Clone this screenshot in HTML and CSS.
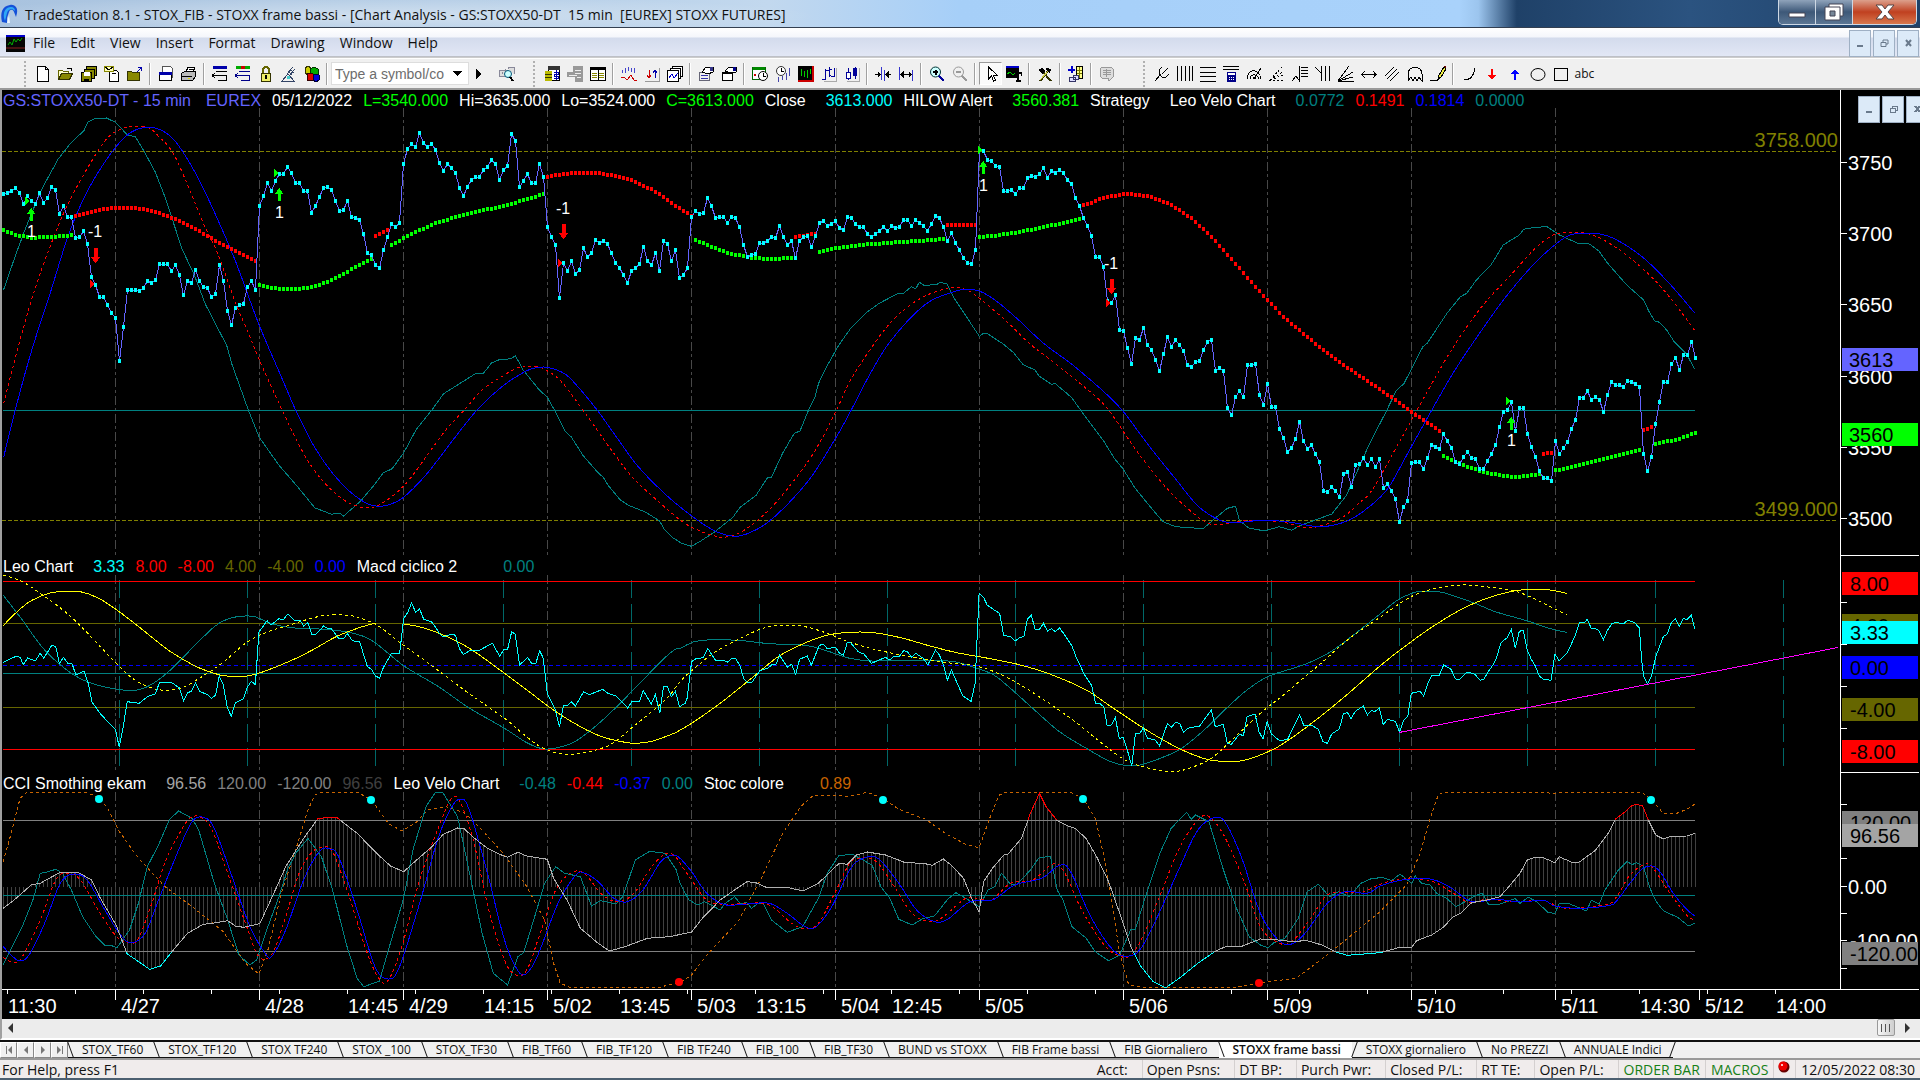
FILE: index.html
```html
<!DOCTYPE html>
<html lang="en">
<head>
<meta charset="utf-8">
<title>TradeStation 8.1 - STOX_FIB</title>
<link rel="stylesheet" href="styles.css">
</head>
<body>
<header class="titlebar">
  <svg class="logo" viewBox="0 0 18 20"><path d="M2 18C0 9 2 2 10 1c5-1 8 3 7 8l-1 4-2-5c-1-3-4-3-5 0l-2 6v5z" fill="#1450d8"/><path d="M4 14C3 7 6 3 11 3c3 0 4 2 4 4-3-3-7-2-8 2l-2 8z" fill="#2fa8f5"/><path d="M7 19l2-8 1 8z" fill="#eaf4ff"/></svg>
  <h1>TradeStation 8.1 - STOX_FIB - STOXX frame bassi - [Chart Analysis - GS:STOXX50-DT&nbsp; 15 min&nbsp; [EUREX] STOXX FUTURES]</h1>
  <div class="wincontrols">
    <button class="wmin" aria-label="Minimize"><svg viewBox="0 0 18 16" width="18" height="16"><path d="M1 9h16v4H1z" fill="#fff" stroke="#445"/></svg></button>
    <button class="wmax" aria-label="Restore"><svg viewBox="0 0 20 18" width="20" height="18"><path d="M5 1h14v12H5z" fill="#fff" stroke="#445"/><path d="M1 4h15v13H1z" fill="#fff" stroke="#445"/><path d="M6 8h5v5H6z" fill="#789" stroke="#445"/></svg></button>
    <button class="wclose" aria-label="Close"><svg viewBox="0 0 20 16" width="20" height="16"><path d="M1 1h6l3 4 3-4h6l-6 7 6 7h-6l-3-4-3 4H1l6-7z" fill="#fff" stroke="#544"/></svg></button>
  </div>
</header>
<nav class="menubar">
  <svg width="19" height="17" viewBox="0 0 19 17"><path d="M0 0h19v17H0z" fill="#050505"/><path d="M0 0h19v2H0z" fill="#00c"/><path d="M0 13h19" stroke="#822" fill="none"/><path d="M2 10l2-3 2 3 2-6 2 3 2-3 2 2 2-3" stroke="#0a0" fill="none"/></svg>
  <a href="#">File</a><a href="#">Edit</a><a href="#">View</a><a href="#">Insert</a><a href="#">Format</a><a href="#">Drawing</a><a href="#">Window</a><a href="#">Help</a>
  <div class="mdi"><button aria-label="Minimize chart"><svg viewBox="0 0 9 9"><path d="M1 7h6" class="g2"/></svg></button><button aria-label="Restore chart"><svg viewBox="0 0 9 9"><path d="M3 3V1h5v4H6M1 3.500h5v4H1z" class="g1"/></svg></button><button aria-label="Close chart"><svg viewBox="0 0 9 9"><path d="M2 1l5 6M7 1L2 7" class="g2"/></svg></button></div>
</nav>
<div class="toolbar">
  <i class="grip"></i>
  <button aria-label="New"><svg viewBox="0 0 16 16"><path d="M2.500.5h8l3 3v12h-11zM10.500.5v3h3" fill="#fff" stroke="#000"/></svg></button>
  <button aria-label="Open"><svg viewBox="0 0 16 16"><path d="M.5 13.500v-9h4l1 1h5v2" fill="#ffc" stroke="#660"/><path d="M.5 13.500l3-6h11l-3 6z" fill="#880" stroke="#330"/><path d="M9 2.500h4v2" fill="none" stroke="#000"/></svg></button>
  <button aria-label="Save all"><svg viewBox="0 0 16 16"><path d="M5.500.5h10v9h-10z" fill="#880" stroke="#000"/><path d="M3.500 3.500h10v9h-10z" fill="#880" stroke="#000"/><path d="M.5 6.500h10v9H.5z" fill="#880" stroke="#000"/><path d="M3 6h6v4H3z" fill="#fff"/><path d="M3 13h5v3H3z" fill="#000"/></svg></button>
  <button aria-label="Workspace from template"><svg viewBox="0 0 16 16"><path d="M5.500 4.500h7l2 2v9h-9z" fill="#fff" stroke="#000"/><path d="M.5.500h9v5h-9z" fill="#ffb" stroke="#880"/><path d="M1 1l4 3 4-3M8 7.500h4" fill="none" stroke="#000"/></svg></button>
  <button aria-label="Close workspace"><svg viewBox="0 0 16 16"><path d="M.5 14.500v-9h4l1 1h7v8z" fill="#880" stroke="#330"/><path d="M10 6l4-4M11 1.500h3.500V5" fill="none" stroke="#00a"/></svg></button>
  <i class="sep"></i>
  <button aria-label="Window"><svg viewBox="0 0 16 16"><path d="M4.500.5h8l2 2v9h-10z" fill="#fff" stroke="#555"/><path d="M1.500 6.500h12v8h-12z" fill="#fff" stroke="#000"/><path d="M1 6h13v3H1z" fill="#00a"/></svg></button>
  <button aria-label="Print"><svg viewBox="0 0 16 16"><path d="M5 6l2-5h7l-2 5" fill="#fff" stroke="#000"/><path d="M.5 7.500l3-2h11v5l-3 4H.5z" fill="#bbb" stroke="#000"/><path d="M1 10.500h10M8 3.500h4" stroke="#000"/><path d="M7 12h2v1H7z" fill="#dd0"/></svg></button>
  <i class="sep"></i>
  <button aria-label="Insert bar"><svg viewBox="0 0 16 16"><path d="M1 0h14v3H1z" fill="#00a"/><path d="M4 5.500h11M6 9.500h8v5H6M0 9.500h6M3 7l-3 2.500L3 12" fill="none" stroke="#000"/></svg></button>
  <button aria-label="Replace bar"><svg viewBox="0 0 16 16"><path d="M1 0h5v3H1z" fill="#0a0"/><path d="M6 0h4v3H6z" fill="#c00"/><path d="M10 0h5v3h-5z" fill="#0a0"/><path d="M4 5.500h11M6 9.500h8v5H6M0 9.500h6M3 7l-3 2.500L3 12" fill="none" stroke="#008"/></svg></button>
  <button aria-label="Lock"><svg viewBox="0 0 16 16"><path d="M5 7V3l2-2h2l2 2v4" fill="none" stroke="#660" stroke-width="2"/><path d="M3.500 7.500h9v8h-9z" fill="#ee6" stroke="#330"/><path d="M7 9h2v4H7z"/></svg></button>
  <button aria-label="Data feed"><svg viewBox="0 0 16 16"><path d="M1 15l6-7 6 7zM6 8l6-7M8 10l6-7M7 5l4 4M9 3l4 4" fill="none" stroke="#346"/><path d="M6 10h3v3H6z" fill="#4cc"/></svg></button>
  <button aria-label="Components"><svg viewBox="0 0 16 16"><path d="M1 2l3-2 3 2v5l-3 2-3-2z" fill="#cc0" stroke="#330"/><path d="M6 3l4-2 4 2v5l-4 1-4-1z" fill="#0a0" stroke="#030"/><path d="M3 8l3-1 3 1v6l-3 1-3-1z" fill="#d00" stroke="#300"/><path d="M9 9l3-1 3 1v5l-3 2-3-2z" fill="#00d" stroke="#003"/></svg></button>
  <i class="sep"></i>
  <label class="symbol"><input type="text" placeholder="Type a symbol/co" aria-label="Symbol"><svg viewBox="0 0 9 5"><path d="M0 0h9L4.500 5z"/></svg></label>
  <button class="go" aria-label="Go"><svg viewBox="0 0 16 16"><path d="M5 3l5 5-5 5z"/></svg></button>
  <button class="find" aria-label="Symbol lookup"><svg viewBox="0 0 16 16"><path d="M.5 4.500h8v6h-8zM3 8V6M6 8V3M9 3V1h6v7" fill="#ddd" stroke="#889"/><circle cx="9" cy="8" r="3.500" fill="#cff" stroke="#057"/><path d="M11 11l3 4" stroke="#000" stroke-width="2"/></svg></button>
  <i class="grip"></i>
  <button aria-label="Account"><svg viewBox="0 0 16 16"><path d="M4.500.5h11v14h-11z" fill="#fff" stroke="#000"/><path d="M4 0h12v4H4z" fill="#333"/><path d="M1 5h7v10H1z" fill="#bb0"/><path d="M1 8.500h7M1 11.500h7" stroke="#330"/><path d="M10 6h4v2h-4v2h4v2h-4M12 4v10" fill="none" stroke="#00a"/></svg></button>
  <button aria-label="Orders"><svg viewBox="0 0 16 16"><path d="M6 0h10v16H8v-5H0V6h6z" fill="#999"/><path d="M8 4.500h6M8 7.500h6M2 9h8M10 11h4" stroke="#eee"/></svg></button>
  <button aria-label="Matrix"><svg viewBox="0 0 16 16"><path d="M.5 1.500h15v13H.5z" fill="#fff" stroke="#000"/><path d="M1 1h14v3H1z"/><path d="M2 7.500h5M2 9.500h5M2 11.500h5M9 7.500h5M9 9.500h5M9 11.500h5" stroke="#880"/><path d="M8 4v11" stroke="#000"/></svg></button>
  <i class="sep"></i>
  <button aria-label="Insert analysis"><svg viewBox="0 0 16 16"><path d="M1.500 4v3M4.500 2v5M7.500 1v4M10.500 2v4M13.500 2v5" stroke="#44c"/><path d="M0 11h3l3 3 4-5 3 5h3" fill="none" stroke="#c00"/></svg></button>
  <button aria-label="Insert strategy"><svg viewBox="0 0 16 16"><path d="M15.500 2v13H1" fill="none" stroke="#999"/><path d="M5 4v8M3 9l2 3 2-3" fill="none" stroke="#c00"/><path d="M11 12V4M9 7l2-3 2 3" fill="none" stroke="#00a"/></svg></button>
  <button aria-label="Chart windows"><svg viewBox="0 0 16 16"><path d="M5.500.5h10v10h-10z" fill="#fff" stroke="#000"/><path d="M3.500 2.500h10v10h-10z" fill="#fff" stroke="#000"/><path d="M.5 4.500h11v11H.5z" fill="#fff" stroke="#000"/><path d="M2 12l3-4 2 4 4-5" fill="none" stroke="#00c"/></svg></button>
  <i class="sep"></i>
  <button aria-label="Format symbol"><svg viewBox="0 0 16 16"><path d="M1.500 6.500h10v8h-10z" fill="#eee" stroke="#667"/><path d="M3 9.500h7M3 12h7" stroke="#33a"/><path d="M4 6l4-5h7v5l-5 2z" fill="#fff" stroke="#000"/><path d="M12 1h3v4h-3z" fill="#338"/></svg></button>
  <button aria-label="Format window"><svg viewBox="0 0 16 16"><path d="M1.500 6.500h10v8h-10z" fill="#fff" stroke="#000"/><path d="M1 6h11v2H1z"/><path d="M4 5l4-4h7v5l-5 1z" fill="#fff" stroke="#000"/><path d="M12 1h3v4h-3z" fill="#008"/></svg></button>
  <i class="sep"></i>
  <button aria-label="Calendar"><svg viewBox="0 0 16 16"><path d="M.5 1.500h13v12H.5z" fill="#fff" stroke="#060"/><path d="M1 1h12v3H1z" fill="#080"/><path d="M2 8h2v2H2z" fill="#c00"/><circle cx="11" cy="10" r="4.500" fill="#fff" stroke="#000"/><path d="M11 7v3h3" fill="none" stroke="#000"/></svg></button>
  <button aria-label="Bar interval"><svg viewBox="0 0 16 16"><circle cx="6" cy="5" r="4.500" fill="#fff" stroke="#333"/><path d="M6 2v3h3" fill="none" stroke="#000"/><path d="M3.500 11v5M7.500 10v4M11.500 7v7M14.500 2v8" stroke="#44a"/></svg></button>
  <button aria-label="Chart colors"><svg viewBox="0 0 16 16"><path d="M0 0h16v16H0z" fill="#c00"/><path d="M0 0h14v14H0z"/><path d="M3.500 3v7M6.500 5v6M9.500 4v8M12.500 3v5" stroke="#0c0"/></svg></button>
  <button aria-label="OHLC bars"><svg viewBox="0 0 16 16"><path d="M4 3v11M8 1v10M13 2v9M1 13h3M4 4h4M8 9h2M8 3h3M10 10h3" stroke="#009" fill="none"/><path d="M15.500 2v13H3" stroke="#aaa" fill="none"/></svg></button>
  <button aria-label="Candles"><svg viewBox="0 0 16 16"><path d="M4 2v12M11 1v12" stroke="#009"/><path d="M2 6h4v6H2z" fill="#fff" stroke="#009"/><path d="M9 2h4v8H9z" fill="#009"/><path d="M15.500 2v13H3" stroke="#aaa" fill="none"/></svg></button>
  <i class="sep"></i>
  <button aria-label="Less spacing"><svg viewBox="0 0 16 16"><path d="M6.500 1v13M9.500 4v11" stroke="#33c"/><path d="M0 8.500h5M3 6v5l2-2.500zM16 8.500h-5M13 6v5l-2-2.500z" stroke="#000"/></svg></button>
  <button aria-label="More spacing"><svg viewBox="0 0 16 16"><path d="M1.500 1v13M14.500 4v11" stroke="#33c"/><path d="M3 8.500h10M5 6v5L3 8.500zM11 6v5l2-2.500z" stroke="#000"/></svg></button>
  <i class="sep"></i>
  <button aria-label="Zoom in"><svg viewBox="0 0 16 16"><circle cx="6.500" cy="6" r="5" fill="#cff" stroke="#033"/><path d="M4 6h5M6.500 3.500v5" stroke="#000" stroke-width="2"/><path d="M10 10l5 5" stroke="#009" stroke-width="2"/></svg></button>
  <button aria-label="Zoom out"><svg viewBox="0 0 16 16"><circle cx="6.500" cy="6" r="5" fill="none" stroke="#999"/><path d="M4 6h5M10 10l5 5" stroke="#999" stroke-width="2"/></svg></button>
  <i class="sep"></i>
  <button class="on" aria-label="Pointer"><svg viewBox="0 0 16 16"><path d="M5.500 1v12l3-3 2 5 2-1-2-4.500h4z" fill="#fff" stroke="#000"/></svg></button>
  <button aria-label="Data tip"><svg viewBox="0 0 16 16"><path d="M0 1h13v11H0z"/><path d="M0 0h13v2H0z" fill="#00c"/><path d="M1 8l3-2 3 3 4-3" fill="none" stroke="#0c0"/><path d="M9 7h7v3M12 7v9M10 15h5" stroke="#000" stroke-width="2" fill="none"/></svg></button>
  <i class="sep"></i>
  <button aria-label="Tools"><svg viewBox="0 0 16 16"><path d="M3 15L12 4M4 4l10 11" stroke="#330" stroke-width="2"/><path d="M3 14L12 4" stroke="#cc4"/><path d="M9 2l5 1-1 4-3-2z"/><path d="M1 4l4-2 3 3-3 3z"/></svg></button>
  <i class="sep"></i>
  <button aria-label="Add to matrix"><svg viewBox="0 0 16 16"><path d="M8.500.5h6v12h-6z" fill="#ff8" stroke="#000"/><path d="M9 4.500h5M9 7.500h5M11.500 1v11" stroke="#770"/><path d="M3.500 0v7M0 3.500h7" stroke="#00c" stroke-width="2"/><path d="M1.500 11.500h6v4h-6zM5 9h5v4H5z" fill="#ddf" stroke="#336"/></svg></button>
  <i class="sep"></i>
  <button aria-label="Notes"><svg viewBox="0 0 16 16"><path d="M3 1h9l2 2v8l-4 4-1-3H3l-2-2V3z" fill="#ddd" stroke="#999"/><path d="M4 4.500h8M4 6.500h8M4 8.500h8M7.500 3v8" stroke="#999"/></svg></button>
  <i class="grip wide"></i>
  <button aria-label="Andrews pitchfork"><svg viewBox="0 0 16 16"><path d="M1 15l6-7M5 4v4l3 3h4l3-3M5 4l3-3M8 8l6-6" class="k"/></svg></button>
  <button aria-label="Cycle lines"><svg viewBox="0 0 16 16"><path d="M.5 0v15M4.500 0v15M8.500 0v15M12.500 0v15M15.500 0v15" class="k"/></svg></button>
  <button aria-label="Price lines"><svg viewBox="0 0 16 16"><path d="M0 1.500h16M0 6.500h16M0 10.500h16M0 15.500h16" class="k"/></svg></button>
  <button aria-label="Retracement calculator"><svg viewBox="0 0 16 16"><path d="M0 .5h16M0 3.500h16" class="k"/><path d="M4 6h9v10H4z" fill="#008"/><path d="M5 7h7v2H5zM6 11h1v1H6zM8 11h1v1H8zM10 11h1v1h-1zM6 13h1v1H6zM8 13h1v1H8zM10 13h1v1h-1z" fill="#fff"/></svg></button>
  <button aria-label="Speed arcs"><svg viewBox="0 0 16 16"><path d="M1 13c0-10 12-12 14 0M4 13c0-5 7-6 9 0M8 13L15 2M7 13c0-2 2-2 3 0" class="k"/></svg></button>
  <button aria-label="Fan"><svg viewBox="0 0 16 16"><path d="M0 14.500h15M1 14L14 0M1 14L15 5M1 14l14-5" class="k" stroke-dasharray="2 2"/></svg></button>
  <button aria-label="Time extension"><svg viewBox="0 0 16 16"><path d="M0 15l4-5 3 4V0M9 1.500h7M9 4.500h7M9 7.500h7M9 10.500h7" class="k"/></svg></button>
  <button aria-label="Time retracement"><svg viewBox="0 0 16 16"><path d="M0 1l6 6M6.500 0v15M10.500 0v15M14.500 0v15" class="k"/></svg></button>
  <button aria-label="Gann fan"><svg viewBox="0 0 16 16"><path d="M0 15L11 0M0 15L15 6M0 15.500h16M0 15l15-4" class="k"/></svg></button>
  <button aria-label="Horizontal line"><svg viewBox="0 0 16 16"><path d="M1 8.500h14M4 5L1 8.500 4 12M12 5l3 3.500-3 3.500" class="k"/></svg></button>
  <button aria-label="Parallel lines"><svg viewBox="0 0 16 16"><path d="M1 10L10 1M3 13L13 3M6 15l9-9" class="k"/></svg></button>
  <button aria-label="Arc"><svg viewBox="0 0 16 16"><path d="M1 15V8c0-9 14-9 14 0v7l-3-4-2 4-2-4-2 4-2-4z" class="k"/></svg></button>
  <button aria-label="Pencil"><svg viewBox="0 0 16 16"><path d="M0 14.500h7l3-3" class="k"/><path d="M8 13l1-4 5-8 2 2-5 8z" fill="#ee4" stroke="#000"/><path d="M13 0h3v3z" fill="#600"/></svg></button>
  <i class="sep"></i>
  <button aria-label="Curve"><svg viewBox="0 0 16 16"><path d="M3 14c6 0 10-4 11-12" class="k"/></svg></button>
  <button aria-label="Down arrow"><svg viewBox="0 0 16 16"><path d="M7 3h2v6h3l-4 5-4-5h3z" fill="#f00"/></svg></button>
  <button aria-label="Up arrow"><svg viewBox="0 0 16 16"><path d="M8 3l4 5H9v6H7V8H4z" fill="#00f"/></svg></button>
  <button aria-label="Ellipse"><svg viewBox="0 0 16 16"><ellipse cx="8" cy="8.500" rx="7" ry="6" class="k"/></svg></button>
  <button aria-label="Rectangle"><svg viewBox="0 0 16 16"><path d="M1.500 2.500h13v12h-13z" class="k"/></svg></button>
  <button class="abc">abc</button>
</div>

<main class="chart">
  <section class="pane">
    <svg class="plot" viewBox="2 90 1838 466" preserveAspectRatio="none">
      <path class="session" d="M115.500 108V555M259.500 108V555M403.500 108V555M547.500 108V555M691.500 108V555M835.500 108V555M979.500 108V555M1123.500 108V555M1267.500 108V555M1411.500 108V555M1555.500 108V555"/>
      <path class="level" d="M2 151.500H1836M2 520.500H1836"/>
      <path class="teal" d="M3 410.500H1695"/>
      <path class="teal" id="velo1"/><path class="red dash" id="velo1Fast"/><path class="blue" id="velo1Slow"/>
      <path class="trail down" id="trailDown"/><path class="trail up" id="trailUp"/>
      <path class="price" id="price"/><path class="ticks" id="priceDots"/>
      <g id="signals"></g>
      <text class="num olive" x="1838" y="147" text-anchor="end">3758.000</text>
      <text class="num olive" x="1838" y="516" text-anchor="end">3499.000</text>
    </svg>
    <p class="legend"><span class="c-sym">GS:STOXX50-DT - 15 min</span><span class="c-sym pre">EUREX</span><span>05/12/2022</span><span class="c-lime">L=3540.000</span><span>Hi=3635.000</span><span>Lo=3524.000</span><span class="c-lime">C=3613.000</span><span class="name">Close</span><span class="c-cyan">3613.000</span><span class="name">HILOW Alert</span><span class="c-lime">3560.381</span><span class="name">Strategy</span><span class="name">Leo Velo Chart</span><span class="c-teal">0.0772</span><span class="c-red">0.1491</span><span class="c-blue">0.1814</span><span class="c-teal">0.0000</span></p>
  </section>
  <svg class="axis" viewBox="1840 90 80 466" preserveAspectRatio="none">
    <path class="rule" d="M1840.500 90V556M1840 555.500H1919M1841 162.500H1847M1841 233.500H1847M1841 304.500H1847M1841 376.500H1847M1841 447.500H1847M1841 518.500H1847"/>
    <g class="num white"><text x="1848" y="170">3750</text><text x="1848" y="241">3700</text><text x="1848" y="312">3650</text><text x="1848" y="384">3600</text><text x="1848" y="455">3550</text><text x="1848" y="526">3500</text></g>
    <path fill="#6464ff" d="M1842 348H1918v23H1842z"/><path fill="#0f0" d="M1842 423H1918v23H1842z"/>
    <g class="num"><text x="1849" y="367">3613</text><text x="1849" y="442">3560</text></g>
  </svg>
  <div class="mdi inner"><button aria-label="Minimize pane"><svg viewBox="0 0 9 9"><path d="M1 7h6" class="g2"/></svg></button><button aria-label="Restore pane"><svg viewBox="0 0 9 9"><path d="M3 3V1h5v4H6M1 3.500h5v4H1z" class="g1"/></svg></button><button aria-label="Close pane"><svg viewBox="0 0 9 9"><path d="M2 1l5 6M7 1L2 7" class="g2"/></svg></button></div>

  <section class="pane">
    <svg class="plot" viewBox="2 556 1838 217" preserveAspectRatio="none">
      <path class="session" d="M115.500 575V771M259.500 575V771M403.500 575V771M547.500 575V771M691.500 575V771M835.500 575V771M979.500 575V771M1123.500 575V771M1267.500 575V771M1411.500 575V771M1555.500 575V771"/>
      <path class="cycle" d="M119.500 580V766M247.500 580V766M375.500 580V766M503.500 580V766M631.500 580V766M759.500 580V766M887.500 580V766M1015.500 580V766M1143.500 580V766M1271.500 580V766M1399.500 580V766M1527.500 580V766M1655.500 580V766M1783.500 580V766"/>
      <path class="red" d="M3 581.500H1695M3 749.500H1695"/>
      <path class="oliveline" d="M3 623.500H1695M3 707.500H1695"/>
      <path class="blue dash2" d="M3 665.500H1695"/>
      <path class="teal" d="M3 673.500H1695"/>
      <path class="teal" id="macdSlow"/><path class="yellow" id="macd"/><path class="yellow dash" id="macdFast"/>
      <path class="cyan" id="leo"/>
      <path class="magenta" d="M1399 732.500L1838 647.500"/>
    </svg>
    <p class="legend"><span class="name">Leo Chart</span><span class="c-cyan">3.33</span><span class="c-red">8.00</span><span class="c-red">-8.00</span><span class="c-olive">4.00</span><span class="c-olive">-4.00</span><span class="c-blue">0.00</span><span class="name far">Macd ciclico 2</span><span class="c-teal">0.00</span></p>
  </section>
  <svg class="axis" viewBox="1840 556 80 217" preserveAspectRatio="none">
    <path class="rule" d="M1840.500 556V773M1840 772.500H1919M1841 602.500H1847M1841 644.500H1847M1841 686.500H1847M1841 728.500H1847"/>
    <path fill="red" d="M1842 572H1918v23H1842zM1842 740H1918v23H1842z"/><path fill="#660" d="M1842 614H1918v23H1842zM1842 698H1918v23H1842z"/><path fill="#00f" d="M1842 656H1918v23H1842z"/>
    <g class="num"><text x="1850" y="591">8.00</text><text x="1850" y="633">4.00</text><text x="1850" y="675">0.00</text><text x="1850" y="717">-4.00</text><text x="1850" y="759">-8.00</text></g>
    <path fill="#0ff" d="M1842 621H1918v23H1842z"/><text class="num" x="1850" y="640">3.33</text>
  </svg>

  <section class="pane">
    <svg class="plot" viewBox="2 773 1838 216" preserveAspectRatio="none">
      <defs>
        <pattern id="bars" x="2" y="0" width="4" height="8" patternUnits="userSpaceOnUse"><path d="M1 0h1v8H1z" fill="#404040"/></pattern>
        <clipPath id="over"><path d="M0 773H1700V820H0z"/></clipPath>
        <clipPath id="under"><path d="M0 952H1700V989H0z"/></clipPath>
      </defs>
      <path class="session" d="M115.500 792V988M259.500 792V988M403.500 792V988M547.500 792V988M691.500 792V988M835.500 792V988M979.500 792V988M1123.500 792V988M1267.500 792V988M1411.500 792V988M1555.500 792V988"/>
      <path id="cciBars" fill="url(#bars)"/>
      <path class="grey" d="M3 820.500H1695M3 951.500H1695"/>
      <path class="teal" d="M3 895.500H1695"/>
      <path class="orange dash" id="stoc"/>
      <path class="teal" id="velo3"/><path class="red dash" id="velo3Fast"/><path class="blue" id="velo3Slow"/>
      <path class="silver" id="cci"/><path class="red" id="cciOver" clip-path="url(#over)"/><path class="cyan" id="cciUnder" clip-path="url(#under)"/>
      <g fill="#0ff"><circle cx="99" cy="799" r="4"/><circle cx="371" cy="800" r="4"/><circle cx="883" cy="800" r="4"/><circle cx="1083" cy="799" r="4"/><circle cx="1651" cy="800" r="4"/></g>
      <g fill="red"><circle cx="679" cy="982" r="4"/><circle cx="1259" cy="983" r="4"/></g>
    </svg>
    <p class="legend"><span class="name">CCI Smothing ekam</span><span class="c-silver">96.56</span><span class="c-grey">120.00</span><span class="c-grey">-120.00</span><span class="c-dark">96.56</span><span class="name">Leo Velo Chart</span><span class="c-teal">-0.48</span><span class="c-red">-0.44</span><span class="c-blue">-0.37</span><span class="c-teal">0.00</span><span class="name mid">Stoc colore</span><span class="c-orange">0.89</span></p>
  </section>
  <svg class="axis" viewBox="1840 773 80 216" preserveAspectRatio="none">
    <path class="rule" d="M1840.500 773V989M1841 804.500H1847M1841 858.500H1847M1841 886.500H1847M1841 913.500H1847M1841 940.500H1847M1841 968.500H1847"/>
    <g class="num white"><text x="1848" y="894">0.00</text><text x="1850" y="948">-100.00</text></g>
    <path fill="#808080" d="M1842 811H1918v23H1842zM1842 942H1918v23H1842z"/>
    <g class="num"><text x="1850" y="830">120.00</text><text x="1850" y="961">-120.00</text></g>
    <path fill="#a4a4a4" d="M1842 824H1918v23H1842z"/><text class="num" x="1850" y="843">96.56</text>
  </svg>

  <svg class="time" viewBox="2 989 1918 30" preserveAspectRatio="none">
    <path class="rule" id="timeTicks"/>
    <g class="num white"><text x="8" y="1013">11:30</text><text x="121" y="1013">4/27</text><text x="265" y="1013">4/28</text><text x="348" y="1013">14:45</text><text x="409" y="1013">4/29</text><text x="484" y="1013">14:15</text><text x="553" y="1013">5/02</text><text x="620" y="1013">13:45</text><text x="697" y="1013">5/03</text><text x="756" y="1013">13:15</text><text x="841" y="1013">5/04</text><text x="892" y="1013">12:45</text><text x="985" y="1013">5/05</text><text x="1129" y="1013">5/06</text><text x="1273" y="1013">5/09</text><text x="1417" y="1013">5/10</text><text x="1561" y="1013">5/11</text><text x="1640" y="1013">14:30</text><text x="1705" y="1013">5/12</text><text x="1776" y="1013">14:00</text></g>
  </svg>
</main>

<div class="scroll">
  <button aria-label="Scroll left"><svg viewBox="0 0 6 10"><path d="M5 0v10L0 5z" fill="#333"/></svg></button>
  <i class="thumb"></i>
  <button aria-label="Scroll right"><svg viewBox="0 0 6 10"><path d="M1 0v10l5-5z" fill="#333"/></svg></button>
</div>
<nav class="tabs">
  <div class="nav"><button aria-label="First tab"><svg viewBox="0 0 8 8"><path d="M1 0h1v8H1zM7 0v8L3 4z"/></svg></button><button aria-label="Previous tab"><svg viewBox="0 0 8 8"><path d="M6 0v8L2 4z"/></svg></button><button aria-label="Next tab"><svg viewBox="0 0 8 8"><path d="M2 0v8l4-4z"/></svg></button><button aria-label="Last tab"><svg viewBox="0 0 8 8"><path d="M6 0h1v8H6zM1 0v8l4-4z"/></svg></button></div>
  <a href="#">STOX_TF60</a><a href="#">STOX_TF120</a><a href="#">STOX TF240</a><a href="#">STOX _100</a><a href="#">STOX_TF30</a><a href="#">FIB_TF60</a><a href="#">FIB_TF120</a><a href="#">FIB TF240</a><a href="#">FIB_100</a><a href="#">FIB_TF30</a><a href="#">BUND vs STOXX</a><a href="#">FIB Frame bassi</a><a href="#">FIB Giornaliero</a><a href="#" class="active" aria-current="page">STOXX frame bassi</a><a href="#">STOXX giornaliero</a><a href="#">No PREZZI</a><a href="#" class="last">ANNUALE Indici</a>
</nav>
<footer class="status">
  <span class="help">For Help, press F1</span>
  <span>Acct:</span><span>Open Psns:</span><span>DT BP:</span><span>Purch Pwr:</span><span>Closed P/L:</span><span>RT TE:</span><span>Open P/L:</span><span class="green">ORDER BAR</span><span class="green">MACROS</span><span class="led"><svg viewBox="0 0 12 12"><circle cx="6" cy="6" r="5.500" fill="#600"/><circle cx="5" cy="5" r="4.500" fill="#e00"/><circle cx="4" cy="4" r="1" fill="#fff"/></svg></span><span class="clock">12/05/2022 08:30</span>
</footer>
<script src="chart.js"></script>
</body>
</html>
```
FILE: styles.css
```css
* { box-sizing: border-box; }
body { margin: 0; height: 100vh; display: flex; flex-direction: column; overflow: hidden; background: #f0f0f0; font: 14px/18px "Open Sans", "Noto Sans", sans-serif; color: #111; border-bottom: 2px solid #4c5f70; }
button { padding: 0; border: 0; background: none; font: inherit; color: inherit; display: flex; align-items: center; justify-content: center; }
a { color: inherit; text-decoration: none; }
p, h1 { margin: 0; }

.titlebar { height: 28px; flex: none; display: flex; align-items: center; gap: 7px; border-bottom: 1px solid #333f50; background: radial-gradient(ellipse 440px 20px at 380px 16px, rgba(255, 255, 255, 0.4), transparent), linear-gradient(90deg, #a9c3df 0, #b4cde6 25%, #c2d8ee 40%, #a6cff8 50%, #a9d2fb 76%, #9cc5ee 77%, #1f4168 79%, #2b5380 88%, #1f4168 100%); }
.logo { width: 18px; height: 20px; }
.titlebar h1 { font: 14px/20px "Open Sans", sans-serif; white-space: nowrap; flex: 1; padding-top: 2px; }
.wincontrols { display: flex; align-self: flex-start; height: 25px; margin-right: 3px; border: 1px solid #cdd8e4; border-top: 0; border-radius: 0 0 5px 5px; overflow: hidden; }
.wincontrols button { width: 37px; border-right: 1px solid #cdd8e4; background: linear-gradient(#8fa3ba, #3d5878 50%, #5b7694); }
.wincontrols .wclose { width: 63px; border: 0; background: linear-gradient(#dca08c, #c04020 50%, #d8774c); }

.menubar { height: 31px; flex: none; display: flex; align-items: center; gap: 15px; padding: 0 0 1px 6px; background: linear-gradient(#fff, #f4f6fb 9px, #d3dbec 10px, #e2e7f5 28px, #999 29px, #fff 30px); }
.menubar > svg { margin-right: -7px; }
.mdi { display: flex; gap: 2px; margin-left: auto; }
.mdi button { width: 22px; height: 27px; background: #dceaf8; border: 1px solid #9fb0c4; }
.mdi svg { width: 9px; height: 9px; }
.menubar .mdi { padding-right: 1px; }
.g1, .g2 { fill: none; stroke: #6a7a8c; }
.g2 { stroke-width: 2; }

.toolbar { height: 31px; flex: none; display: flex; align-items: center; padding-left: 17px; background: #f0f0f0; border-bottom: 2px solid #999; }
.toolbar button { width: 23px; height: 23px; flex: none; }
.toolbar svg { width: 16px; height: 16px; }
.toolbar path { shape-rendering: crispEdges; }
.toolbar .on { background: #fafafa; border: 1px solid; border-color: #999 #fff #fff #999; }
.toolbar .go { width: 19px; }
.toolbar .find { width: 38px; }
.toolbar .abc { font-size: 12px; padding-left: 2px; }
.k { fill: none; stroke: #000; }
.sep { width: 8px; height: 22px; flex: none; background: linear-gradient(90deg, transparent 3px, #a0a0a0 3px 4px, #fff 4px 5px, transparent 5px); }
.grip { width: 14px; height: 26px; flex: none; background: repeating-linear-gradient(#b0b0b0 0 2px, transparent 2px 4px) 7px 0 / 2px 100% no-repeat; }
.grip.wide { margin-left: 18px; }
.symbol { width: 138px; height: 23px; display: flex; align-items: center; background: #fff; border: 1px solid #ddd; padding-right: 6px; }
.symbol input { border: 0; padding: 0 0 0 3px; width: 121px; font: 14px/18px "Liberation Sans", Arial, sans-serif; background: none; }
.symbol input::placeholder { color: #6d6d6d; }
.toolbar .symbol svg { width: 9px; height: 5px; }

.chart { flex: 1; min-height: 0; position: relative; overflow: hidden; display: grid; grid-template-columns: minmax(0, 1fr) 80px; grid-template-rows: minmax(0, 466fr) minmax(0, 217fr) minmax(0, 216fr) 30px; background: #000; border-left: 2px solid #a0a0a0; font-family: "Liberation Sans", Arial, sans-serif; }
.pane { display: grid; min-width: 0; min-height: 0; }
.plot, .legend { grid-area: 1 / 1; }
.plot, .axis, .time { display: block; width: 100%; height: 100%; min-height: 0; }
.time { grid-column: 1 / -1; }
.chart path { fill: none; shape-rendering: crispEdges; }
.chart path[fill] { fill: revert-layer; }
.legend { align-self: start; display: flex; gap: 11px; padding: 1px 0 0 1px; font-size: 16px; line-height: 20px; color: #fff; white-space: nowrap; }
.name { padding-right: 9px; }
.name.far { padding-right: 35px; }
.name.mid { padding-right: 25px; }
.pre { padding-left: 4px; }
.c-sym { color: #6464ff; } .c-lime { color: #0f0; } .c-cyan { color: #0ff; } .c-teal { color: #008080; } .c-red { color: #f00; } .c-blue { color: #00f; }
.c-olive { color: #660; } .c-silver { color: #a4a4a4; } .c-grey { color: #808080; } .c-dark { color: #404040; } .c-orange { color: #c86400; }
.num { font-size: 20px; fill: #000; }
.white { fill: #fff; }
.olive { fill: #808000; }
.sig { font-size: 16px; fill: #fff; }
.session { stroke: #484848; stroke-dasharray: 9 3 3 3; }
.cycle { stroke: #006868; stroke-dasharray: 18 6; }
.level { stroke: #808000; stroke-dasharray: 4 2; }
.oliveline { stroke: #660; }
.teal { stroke: #008080; } .red { stroke: #f00; } .blue { stroke: #00f; } .yellow { stroke: #ff0; } .cyan { stroke: #0ff; }
.magenta { stroke: #f0f; } .orange { stroke: #c86400; } .grey { stroke: #808080; } .silver { stroke: #b0b0b0; } .rule { stroke: #fff; }
.dash { stroke-dasharray: 3 3; }
.dash2 { stroke-dasharray: 4 3; }
.price { stroke: #6464ff; }
.chart .ticks { fill: #0ff; }
.chart .trail.down, .chart .sell { fill: #f00; }
.chart .trail.up, .chart .buy { fill: #0f0; }
.inner { position: absolute; top: 6px; right: -8px; }

.scroll { height: 21px; flex: none; display: flex; align-items: center; justify-content: space-between; padding: 0 5px 2px 1px; background: #ececec; border-left: 2px solid #a0a0a0; border-bottom: 2px solid #fff; }
.scroll button { width: 16px; height: 16px; }
.scroll svg { width: 6px; height: 10px; }
.thumb { width: 18px; height: 17px; margin: 0 4px 0 auto; border: 1px solid #999; border-radius: 2px; background: repeating-linear-gradient(90deg, #555 0 1px, transparent 1px 4px) 3px 4px / 10px 8px no-repeat, linear-gradient(90deg, #f6f6f6, #cfcfcf); }

.tabs { height: 20px; flex: none; display: flex; border-top: 2px solid #111; border-bottom: 2px solid #999; background: #f0f0f0; font-size: 12px; line-height: 15px; white-space: nowrap; }
.nav { display: flex; }
.nav button { width: 17px; height: 16px; border: 1px solid; border-color: #fff #888 #888 #fff; }
.nav svg { width: 8px; height: 8px; fill: #777; }
.tabs a { position: relative; padding: 0 11px 0 14px; border-bottom: 1px solid #111; }
.tabs a::before, .tabs a.last::after { content: ""; position: absolute; left: 2px; top: 0; height: 15px; border-left: 1px solid #111; transform: skewX(20deg); }
.tabs a.last::after { left: auto; right: 0; transform: skewX(-20deg); }
.tabs a.active { font-weight: 600; background: #fff; border-bottom-color: #fff; }
.tabs a.active + a::before { transform: skewX(-20deg); }

.status { height: 18px; flex: none; display: flex; background: #f0ecec; line-height: 20px; white-space: nowrap; }
.status span { padding: 0 14px 0 4px; border-right: 1px solid #d4d0d0; }
.status .help { margin-right: auto; border: 0; padding-left: 2px; }
.status .green { color: #178017; padding: 0 5px; }
.status .led { padding: 1px 5px 0 4px; display: flex; }
.led svg { width: 12px; height: 12px; }
.status .clock { padding: 0 5px; border: 0; }
```
FILE: chart.js
```js
// Curves are sampled in blocks. Each block has a left edge, a horizontal
// resolution (samples per pixel) and a top; vertical samples are thirds of a pixel.
const BLOCKS = { A: [0, 2.8, 110], B: [540, 2.8, 110], C: [1080, 1.8667, 110], D: [0, 2.24, 550], E: [680, 2.24, 550], F: [1220, 3, 550] };

function points(text) {
  let block = BLOCKS.A;
  return text.trim().split('|').map(run => {
    const out = [];
    for (const t of run.trim().split(/\s+/)) {
      if (BLOCKS[t]) { block = BLOCKS[t]; continue; }
      const [x, y] = t.split(',').map(Number);
      out.push([block[0] + x / block[1], block[2] + y / 3]);
    }
    return out;
  });
}
const f = n => n.toFixed(1);
const line = p => 'M' + p.map(q => f(q[0]) + ' ' + f(q[1])).join('L');
function smooth(p) {
  let d = 'M' + f(p[0][0]) + ' ' + f(p[0][1]);
  for (let i = 0; i < p.length - 1; i++) {
    const a = p[i - 1] || p[i], b = p[i], c = p[i + 1], e = p[i + 2] || c;
    d += `C${f(b[0] + (c[0] - a[0]) / 6)} ${f(b[1] + (c[1] - a[1]) / 6)} ${f(c[0] - (e[0] - b[0]) / 6)} ${f(c[1] - (e[1] - b[1]) / 6)} ${f(c[0])} ${f(c[1])}`;
  }
  return d;
}
// One square mark per bar along a run of points.
const mark = (x, y) => `M${x - 1} ${Math.round(y) - 2}h3v4h-3z`;
function marks(p) {
  let d = '';
  for (let x = 3; x < 1700; x += 4) {
    if (x < p[0][0] - 1 || x > p[p.length - 1][0] + 1) continue;
    let i = 1;
    while (i < p.length - 1 && p[i][0] < x) i++;
    const [a, b] = [p[i - 1], p[i]];
    d += mark(x, a[1] + (b[1] - a[1]) * (x - a[0]) / (b[0] - a[0]));
  }
  return d;
}
const put = (id, d) => document.getElementById(id).setAttribute('d', d);
const draw = (id, text, fn = smooth) => put(id, points(text).map(fn).join(''));

// Closing price, one value for each 15 minute bar, 4px apart.
const close = `252 249 243 234 249 282 258 272 283 249 279 264 231 240 312 288 321 321 384 381 364 402 501 525 561 561 585 609
624 753 651 540 540 540 543 534 513 519 510 462 462 462 483 465 495 555 513 519 480 513 531 534 561 552 465 513 603 645 594 585 581 531 513 540
288 258 219 243 213 192 192 171 189 219 219 243 243 309 288 261 234 231 240 273 303 300 273 321 324 330 372 429 436 465 475 420 381 342 351 339
162 117 102 111 69 99 111 102 119 159 183 162 174 189 234 258 231 210 201 201 180 171 150 162 210 180 168 72 93 231 213 192 219 219 162 201
351 381 405 564 460 483 453 492 480 414 441 429 390 399 393 402 429 459 474 495 519 483 474 462 411 453 465 429 483 393 402 453 420 504 495 474
321 303 312 309 264 288 324 321 321 339 321 324 351 405 441 435 432 399 399 393 381 384 348 381 405 393 444 393 381 378 411 378 339 333 348 342
333 354 360 321 324 342 351 351 372 381 372 363 351 363 348 354 351 330 330 348 330 339 348 363 342 318 324 351 393 369 399 420 444 459 462 420
120 124 149 153 168 171 243 243 240 252 234 234 204 198 201 192 174 204 183 189 180 189 210 222 264 288 324 348 378 441 441 471 573 580 556 660
663 714 762 684 690 654 705 720 750 783 732 681 711 690 705 723 765 771 756 753 720 695 690 783 774 783 894 915 861 843 861 765 765 762 855 885
822 891 891 957 984 1026 1014 987 936 993 1017 1005 1032 1056 1143 1146 1131 1143 1161 1092 1086 1131 1065 1062 1044 1065 1047 1071 1047 1134 1122 1143 1167 1236 1191 1173
1059 1056 1056 1077 1044 1005 1011 1017 972 993 1014 1056 1063 1041 1026 1044 1047 1077 1077 1053 1032 1005 951 905 900 876 963 894 894 971 1011 1041 1083 1104 1104 1113
993 1032 1014 996 957 930 863 864 843 870 861 870 906 855 816 825 825 831 813 816 822 831 1032 1083 1041 942 876 816 816 762 744 780 735 735 695 744`
  .split(/\s+/).map((v, i) => [3.5 + 4 * i, 110 + v / 3]);
put('price', line(close));
put('priceDots', close.map(p => mark(p[0] - .5, p[1])).join(''));

draw('velo1', `A 10,539 45,431 70,359 105,267 120,231 163,147 200,97 235,62 246,36 268,25 298,24 323,37 357,75 379,80 405,127 435,187 462,261 485,336 510,417 545,497 575,583 605,645 635,707 650,764 695,899 726,982 782,1067 830,1126 882,1194 905,1203 928,1213 950,1209 962,1218 1010,1173 1050,1122 1073,1089 1098,1076 1130,1029 1165,959 1210,899 1242,851 1275,829 1331,791 1353,791 1376,759 1398,749 1432,746 1443,737 1465,780 1510,840
B 20,861 42,903 72,966 87,980 120,1036 160,1085 178,1103 190,1125 225,1170 250,1187 295,1206 335,1233 348,1258 370,1282 395,1299 424,1309 450,1293 490,1265 540,1222 560,1192 605,1156 637,1103 648,1102 680,1028 712,970 728,963 750,905 770,860 780,820 800,775 837,705 870,655 917,605 950,580 1003,550 1018,550 1040,530 1052,536 1062,517 1075,526 1110,524 1120,517 1140,522 1160,565 1197,625 1230,679 1242,670 1253,671 1297,702 1325,727 1353,764 1386,780 1398,799 1432,823 1443,821 1488,862 1510,895
C 3,905 45,995 65,1047 80,1076 103,1135 130,1188 155,1235 178,1250 230,1256 250,1228 275,1195 290,1189 298,1232 315,1254 335,1260 350,1260 372,1250 395,1261 410,1247 470,1212 497,1157 540,1003 572,903 590,843 605,820 640,710 648,700 685,610 710,560 722,550 740,510 768,463 790,405 820,375 828,358 850,352 872,350 895,375 932,402 950,401 968,422 985,460 1020,524 1052,570 1062,604 1073,633 1082,637 1095,660 1110,697 1133,734 1147,777`, line);
draw('velo1Fast', `A 10,880 60,675 100,530 145,396 190,282 250,165 300,85 340,57 375,49 415,52 445,80 485,130 530,237 570,341 610,432 660,580 700,680 727,752 790,900 830,990 870,1065 910,1120 960,1168 1000,1188 1025,1193 1055,1188 1100,1157 1145,1110 1200,1030 1250,958 1300,900 1350,840 1400,803 1450,773 1480,769 1510,772
B 20,782 60,815 120,900 200,1020 260,1103 330,1173 400,1236 450,1264 490,1278 515,1282 550,1272 590,1247 650,1190 710,1113 770,1022 825,912 870,810 930,710 980,640 1030,590 1080,557 1130,538 1160,532 1190,538 1220,556 1300,628 1370,700 1430,750 1500,810
C 3,824 50,893 100,1010 150,1113 190,1180 235,1237 265,1243 300,1233 340,1231 380,1237 420,1253 450,1247 490,1222 520,1180 545,1140 600,985 650,840 700,703 750,590 800,502 850,415 880,378 900,368 930,367 965,380 1010,423 1060,490 1100,560 1147,660`);
draw('velo1Slow', `A 10,1042 45,890 90,717 140,551 190,380 235,264 275,187 320,117 360,72 400,53 435,54 475,77 510,122 560,215 610,330 660,455 726,646 790,806 830,905 880,1010 930,1088 980,1145 1030,1182 1062,1189 1090,1184 1130,1162 1190,1098 1240,1030 1290,960 1340,895 1400,835 1450,797 1490,776
B 20,772 70,792 110,835 160,900 220,990 275,1070 350,1152 430,1222 490,1263 545,1279 590,1267 640,1235 700,1175 760,1100 825,990 870,903 920,800 970,710 1030,632 1090,575 1150,548 1190,538 1230,543 1280,575 1340,630 1410,700 1480,755
C 0,783 45,846 80,903 130,1010 180,1110 220,1188 260,1230 290,1238 340,1231 390,1236 450,1250 500,1232 540,1190 575,1135 610,1035 655,905 700,780 750,660 800,550 850,458 890,400 915,375 940,370 968,371 1000,388 1050,441 1100,520 1147,608`);
draw('trailDown', `A 208,318 250,306 290,297 330,293 380,294 430,303 490,328 550,359 590,385 630,407 670,430 720,455 | 1047,381 1090,357
| B 17,201 55,194 100,189 160,189 210,198 260,213 320,243 370,282 424,318 | 709,381 776,370 | 1136,345 1223,345
| 1517,286 1550,277 C 5,285 50,260 90,251 130,259 170,285 210,328 250,390 290,462 330,537 380,622 430,690 500,775 570,850 620,908 675,967 | 863,1032 884,1028 | 1050,960 1070,950`, marks);
draw('trailUp', `A 6,360 45,376 90,383 140,381 204,375 | 722,525 780,537 830,537 880,530 930,510 980,480 1044,443 | 1092,406 1160,367 1220,339 1290,316 1350,301 1410,288 1526,251
| B 431,389 480,411 530,430 590,444 650,447 710,444 | 778,427 840,412 920,403 1000,397 1134,387 | 1227,381 1280,376 1340,366 1410,351 1521,325
| C 676,1037 715,1066 760,1090 810,1101 830,1099 860,1092 | 885,1082 930,1067 990,1043 1047,1017 | 1072,1001 1110,990 1152,967`, marks);

// Strategy entries: arrow tip, label anchor and the small fill marker.
const svg = [];
for (const [x, y, ly, tx, ty] of [[31, 208, 237, 25, 201], [279, 188, 218, 274, 173], [983, 161, 191, 978, 150], [1511, 417, 446, 1506, 401]])
  svg.push(`<path class="buy" d="M${x + .5} ${y}l4 6h-3v7h-3v-7h-3z"/><text class="sig" x="${x - 4}" y="${ly}">1</text><path class="buy" d="M${tx} ${ty - 4}v8l4-4z"/>`);
for (const [x, y, ly, tx, ty] of [[95, 263, 237, 90, 284], [563, 239, 214, 558, 263], [1111, 294, 269, 1106, 303]])
  svg.push(`<path class="sell" d="M${x + .5} ${y}l5-6h-3v-9h-4v9h-3z"/><text class="sig" x="${x - 7}" y="${ly}">-1</text><path class="sell" d="M${tx} ${ty - 4}v8l4-4z"/>`);
document.getElementById('signals').innerHTML = svg.join('');

draw('leo', `D 7,337 25,325 38,318 46,323 52,344 62,324 75,331 80,331 90,310 98,325 116,286 125,290 133,340 142,322 152,340 161,340 170,375 188,364 197,396 206,456 224,490 242,516 259,539 267,592 276,530 285,455 312,460 330,440 348,432 357,398 385,398 402,414 411,452 420,428 429,424 438,400 447,424 465,434 474,445 483,436 491,378 500,404 509,470 518,499 527,459 545,447 554,412 563,394 572,404 580,246 590,228 598,212 607,225 625,206 634,210 645,192 660,212 672,210 680,228 690,218 698,253 707,253 725,228 734,236 742,236 760,267 770,266 778,250 788,270 797,275 806,276 815,316 823,350 832,358 841,378 850,384 859,352 877,310 895,312 904,206 913,188 922,158 931,187 940,177 949,208 967,216 976,232 985,252 993,261 1011,252 1020,256 1029,296 1038,313 1055,300 1075,300 1103,280 1119,318 1128,300 1137,298 1146,246 1154,252 1164,345 1182,322 1191,341 1200,341 1209,302 1217,325 1226,430 1235,455 1244,480 1253,531 1262,468 1271,466 1280,456 1289,468 1307,426 1320,434 1350,418 1362,430 1380,438 1406,474 1415,456 1432,455 1441,422 1459,462 1468,434 1478,490 1486,410 1495,410 1504,440 1513,424 1522,470 1535,460
E 16,445 26,335 35,327 52,323 62,295 80,332 97,330 106,337 116,325 125,327 134,346 143,386 152,398 161,397 179,362 197,354 206,344 215,343 223,316 241,352 250,343 259,373 268,328 285,318 294,346 312,286 321,283 330,296 348,292 357,309 366,316 375,276 382,278 400,306 412,312 429,340 460,322 470,330 478,320 492,318 501,302 510,306 519,322 528,310 545,325 555,345 572,300 581,315 590,345 599,390 608,360 625,412 634,438 652,454 661,400 670,130 680,142 688,165 706,182 716,190 725,256 740,260 751,273 760,263 770,260 778,208 787,196 796,240 805,238 814,220 823,243 832,236 841,245 850,234 859,250 878,288 887,320 896,345 905,372 922,406 931,460 940,460 949,470 957,528 966,525 975,503 984,565 993,563 1002,600 1012,648 1020,552 1030,550 1038,534 1047,565 1065,570 1074,588 1092,520 1101,532 1110,517 1119,520 1128,547 1137,535 1164,528 1190,480 1199,530 1217,523 1226,580 1235,583 1253,553 1262,557 1270,500 1288,492 1297,545 1306,567 1315,514 1325,552 1343,572 1361,568 1388,494 1397,526 1415,526 1430,538 1440,575
F 322,580 335,552 358,537 370,492 382,487 393,506 406,484 430,468 442,495 454,482 466,484 478,474 490,524 502,508 526,514 539,547 551,510 563,500 574,430 600,424 611,438 623,402 635,377 658,376 671,345 693,358 706,386 718,390 742,366 765,373 780,391 792,387 805,365 818,346 830,322 842,280 852,270 862,263 874,238 886,294 898,244 910,241 922,300 934,328 946,348 958,378 970,388 993,391 1005,312 1018,333 1042,308 1066,256 1078,218 1092,219 1102,208 1114,235 1126,235 1138,243 1150,270 1162,242 1175,221 1187,217 1210,222 1223,211 1244,218 1258,234 1265,330 1271,380 1283,402 1295,376 1307,320 1330,260 1342,252 1354,218 1366,207 1378,229 1390,206 1402,208 1414,196 1425,238`, line);
draw('macd', `D 7,227 40,183 70,152 110,130 145,124 180,125 220,144 265,183 320,240 380,303 440,350 490,374 520,379 550,379 590,365 650,333 700,300 750,262 790,240 830,223 843,222 | 904,222 950,234 1010,265 1060,302 1130,370 1180,420 1240,480 1300,530 1350,561 1400,577 1425,580 1460,574 1510,550
E 0,540 26,520 90,460 160,385 220,320 270,285 320,259 360,249 400,246 440,249 500,265 560,288 620,308 690,325 760,344 830,373 910,420 960,465 1040,536 1110,590 1170,624 1210,634 1250,634 1290,620 1340,590 1400,535 1480,450
F 480,348 560,285 650,222 730,175 800,145 870,125 930,118 990,120 1040,130`);
draw('macdFast', `D 7,75 50,95 90,130 150,190 200,255 260,340 300,388 340,414 375,421 410,412 450,382 500,337 550,280 600,245 650,225 690,208 730,196 780,196 815,208 850,230 900,282 960,340 1050,430 1130,505 1170,550 1210,590 1245,608 1280,613 1320,605 1370,582 1420,528 1490,450
E 0,395 26,362 80,305 140,262 190,233 235,226 280,230 330,250 370,272 430,296 500,316 580,335 670,350 740,388 810,445 880,510 950,585 1000,632 1050,655 1100,665 1140,655 1190,625 1240,565 1300,490 1350,437 1400,380 1440,335 1500,265
F 480,202 550,154 600,128 650,115 710,106 760,106 820,113 880,122 930,140 980,165 1040,194`);
draw('macdSlow', `D 7,135 50,210 100,300 160,370 210,402 280,421 310,419 340,403 380,362 430,295 480,230 510,207 540,199 570,200 610,222 660,234 740,239 800,253 840,278 904,347 980,408 1050,473 1130,535 1180,578 1215,596 1245,594 1290,573 1350,510 1420,418 1480,335 1510,300
E 0,295 30,276 60,270 130,271 200,281 280,286 330,303 380,325 430,333 500,330 600,333 640,344 700,373 740,415 790,475 850,545 910,595 960,632 1000,647 1030,645 1070,628 1120,598 1170,545 1220,480 1270,420 1320,378 1400,343 1460,303 1520,243
F 480,192 530,152 575,130 600,124 655,125 700,137 760,158 820,183 870,198 920,212 960,226 1005,240 1040,247`);

const cci = `D 7,1075 30,1052 70,1005 90,1000 133,968 175,967 205,990 225,1045 260,1125 285,1212 305,1230 335,1258 360,1248 385,1205 420,1150 455,1123 480,1119 510,1112 527,1128 545,1132 582,1121 620,1010 640,950 680,865 712,806 735,802 755,803 800,850 850,918 875,948 904,965 935,928 965,893 993,853 1025,834 1040,836 1060,862 1090,893 1119,913 1137,922 1160,907 1180,918 1226,928 1240,985 1270,1050 1300,1135 1340,1180 1365,1203 1400,1190 1450,1165 1500,1160
E 26,1146 50,1105 90,1050 120,1022 150,995 170,998 195,1013 240,1012 275,1023 310,1000 340,960 357,940 375,943 395,915 420,906 460,915 505,938 545,940 565,946 590,927 610,948 635,985 655,1050 670,1085 680,995 700,955 725,915 735,912 765,865 785,790 805,730 820,770 845,812 870,828 885,835 910,866 935,925 960,995 985,1090 1010,1190 1030,1245 1060,1295 1088,1313 1120,1283 1160,1240 1200,1203 1225,1188 1260,1188 1300,1167 1340,1170 1380,1176 1400,1170 1440,1186 1470,1207 1495,1216
F 480,1208 540,1192 575,1192 590,1172 635,1155 670,1132 700,1100 720,1091 755,1058 800,1050 840,1040 865,1012 900,970 922,930 945,922 970,923 1005,938 1018,920 1055,937 1078,936 1125,902 1165,850 1187,806 1210,790 1235,767 1250,763 1268,768 1285,810 1307,855 1330,867 1350,860 1400,858 1425,850`;
draw('cci', cci, line); draw('cciOver', cci, line); draw('cciUnder', cci, line);
put('cciBars', line([[3, 886.5], ...points(cci)[0], [1696, 833], [1696, 886.5]]) + 'z');
draw('velo3', `D 7,1245 25,1195 50,1130 75,1045 90,970 105,966 125,958 140,970 160,1020 185,1100 215,1160 235,1186 250,1187 262,1193 290,1140 310,1060 330,950 355,885 380,808 400,783 430,805 445,840 480,1000 510,1110 535,1215 560,1245 575,1230 600,1130 625,1040 645,955 665,905 690,865 720,920 745,1020 775,1180 800,1285 815,1310 850,1293 870,1200 904,1045 925,900 955,768 975,728 992,728 1025,800 1055,990 1080,1150 1105,1270 1137,1305 1160,1220 1173,1208 1200,1090 1220,1000 1245,950 1265,970 1300,980 1325,1068 1345,1052 1380,1062 1395,1040 1423,930 1455,904 1490,910 1515,960
E 0,1000 20,1050 40,1065 55,1055 90,1080 100,1062 122,1040 135,1060 150,1058 160,1075 175,1060 187,1062 205,1110 240,1147 275,1130 285,1105 310,1045 330,970 355,918 385,912 430,945 450,1010 470,1045 490,1108 520,1125 545,1105 570,1098 600,1047 618,1028 640,1045 670,1070 690,1020 705,1010 720,970 740,1002 755,1003 785,960 805,922 830,920 845,1020 858,1050 878,1130 910,1165 930,1205 960,1232 985,1215 1010,1138 1020,1138 1045,1030 1075,910 1100,835 1135,787 1145,808 1155,795 1185,815 1215,950 1245,1070 1275,1160 1300,1185 1318,1193 1330,1178 1355,1165 1385,1105 1405,1025 1430,1003 1455,1040 1475,1025 1500,1040 1525,1000 1550,985
F 490,983 515,992 540,972 575,1000 586,978 605,1000 630,1005 650,1030 680,1045 708,1070 735,1055 765,1037 787,1030 805,1062 840,1062 885,1046 900,1060 925,1042 950,1055 985,1088 1005,1090 1018,1060 1050,1062 1100,1083 1114,1050 1138,1062 1155,1020 1195,960 1222,934 1235,944 1250,938 1270,948 1290,1015 1307,1052 1330,1082 1375,1103 1405,1128 1425,1120`, line);
draw('velo3Fast', `D 7,1222 30,1238 50,1220 90,1110 125,990 150,970 180,990 220,1080 260,1158 290,1178 310,1165 340,1060 370,935 400,855 425,805 450,802 475,840 510,970 550,1120 580,1220 610,1210 640,1100 670,970 700,905 725,892 745,905 780,1030 820,1200 850,1288 870,1290 900,1190 940,990 980,840 1010,748 1030,755 1060,870 1095,1080 1130,1230 1155,1275 1180,1260 1210,1150 1245,1020 1280,968 1310,972 1350,1035 1385,1055 1420,1030 1460,950 1490,912 1510,916
E 0,940 26,990 60,1050 100,1063 150,1060 200,1065 250,1120 280,1136 310,1120 350,1020 380,940 405,924 440,935 480,1010 520,1090 560,1115 590,1100 640,1045 670,1048 700,1048 740,1000 790,990 835,942 860,965 900,1080 950,1185 985,1218 1010,1215 1040,1150 1080,1020 1120,890 1160,810 1185,800 1220,860 1265,1000 1300,1130 1340,1178 1370,1175 1410,1110 1450,1035 1490,1028 1530,1025
F 480,1003 520,992 575,986 640,995 700,1030 750,1058 800,1048 880,1055 970,1053 1040,1075 1160,1063 1190,1040 1230,975 1275,943 1300,955 1350,1030 1400,1095 1425,1110`);
draw('velo3Slow', `D 7,1190 40,1231 65,1215 100,1120 135,1000 165,972 195,990 235,1080 270,1155 295,1178 325,1150 355,1050 400,900 430,815 455,802 480,835 520,980 560,1130 595,1212 610,1217 640,1140 680,990 715,905 740,897 760,925 800,1080 840,1250 870,1287 895,1250 940,1060 980,870 1010,775 1030,748 1050,775 1090,960 1130,1170 1160,1262 1180,1270 1205,1215 1250,1060 1290,975 1310,970 1340,995 1375,1045 1405,1055 1440,1020 1480,935 1508,915
E 0,925 26,965 60,1030 100,1064 150,1062 200,1060 240,1090 280,1130 305,1130 340,1070 380,960 410,925 445,927 490,1000 530,1080 570,1115 600,1107 650,1055 700,1050 750,1005 810,985 850,946 875,965 920,1100 970,1200 1005,1218 1035,1190 1080,1070 1120,950 1160,840 1200,802 1225,825 1260,930 1300,1090 1340,1170 1370,1182 1400,1150 1450,1060 1490,1025 1540,1030
F 480,1008 540,991 605,985 650,992 700,1018 755,1055 830,1048 900,1056 970,1051 1005,1068 1070,1075 1165,1067 1190,1052 1230,1000 1265,958 1295,948 1320,965 1360,1030 1400,1078 1425,1098`);
draw('stoc', `D 7,935 25,850 45,745 60,727 190,727 210,735 240,770 265,840 310,925 370,1010 440,1080 500,1145 550,1240 580,1272 600,1200 630,1030 660,910 690,780 705,735 720,727 800,727 831,748 870,820 900,843 930,820 960,778 1000,770 1040,788 1080,840 1130,915 1180,1010 1220,1110 1240,1240 1255,1300 1275,1311 1480,1311 1515,1299
E 0,1298 26,1275 60,1215 130,1115 180,990 230,850 270,770 300,735 380,739 420,727 455,745 490,778 550,808 600,855 640,883 670,893 695,800 715,735 730,727 875,727 903,745 930,805 950,920 970,1080 985,1210 1005,1305 1030,1311 1250,1311 1297,1298 1380,1285 1430,1235 1500,1160
F 480,1085 530,1035 560,1005 600,910 635,790 655,735 670,727 975,727 1000,731 1015,727 1265,727 1290,745 1330,790 1370,790 1400,778 1425,762`, line);

// Time scale: a long tick at each session, a short one every 17 bars.
let ticks = 'M2 989.5H1919';
for (let x = 115.5; x < 1700; x += 144) ticks += `M${x} 990V1000`;
for (let x = 7.5; x < 1800; x += 68) ticks += `M${x} 990V994`;
put('timeTicks', ticks);
```
